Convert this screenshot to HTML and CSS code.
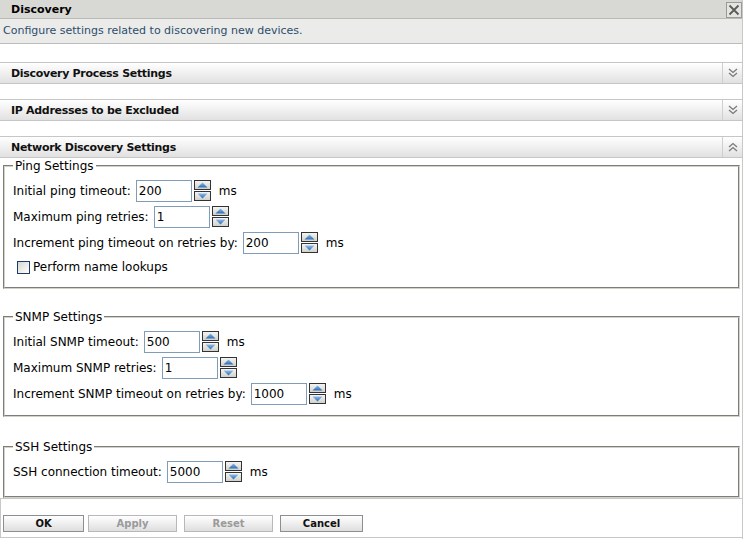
FILE: index.html
```html
<!DOCTYPE html>
<html>
<head>
<meta charset="utf-8">
<link rel="stylesheet" href="styles.css">
</head>
<body>
<div class="page">
  <div class="titlebar">
    <span class="title">Discovery</span>
    <span class="close"><svg width="16" height="16" viewBox="0 0 16 16"><rect x="0.5" y="0.5" width="15" height="15" fill="#e4e4e0" stroke="#9a9a96"/><path d="M3.5 3.5 L12.5 12.5 M12.5 3.5 L3.5 12.5" stroke="#5a5a5a" stroke-width="1.8"/></svg></span>
  </div>
  <div class="desc">Configure settings related to discovering new devices.</div>
  <div class="spacer"></div>
  <div class="sechead">
    <span class="sectitle">Discovery Process Settings</span>
    <span class="chev"><svg width="10" height="10" viewBox="0 0 10 10"><path d="M1 1 L5 4.5 L9 1 M1 5 L5 8.5 L9 5" fill="none" stroke="#7a7a7a" stroke-width="1.3"/></svg></span>
  </div>
  <div class="secgap"></div>
  <div class="sechead">
    <span class="sectitle">IP Addresses to be Excluded</span>
    <span class="chev"><svg width="10" height="10" viewBox="0 0 10 10"><path d="M1 1 L5 4.5 L9 1 M1 5 L5 8.5 L9 5" fill="none" stroke="#7a7a7a" stroke-width="1.3"/></svg></span>
  </div>
  <div class="secgap"></div>
  <div class="sechead">
    <span class="sectitle">Network Discovery Settings</span>
    <span class="chev"><svg width="10" height="10" viewBox="0 0 10 10"><path d="M1 5 L5 1.5 L9 5 M1 9 L5 5.5 L9 9" fill="none" stroke="#7a7a7a" stroke-width="1.3"/></svg></span>
  </div>
  <div class="content">
    <fieldset class="group ping">
      <legend>Ping Settings</legend>
      <div class="row">
        <span class="label">Initial ping timeout:</span>
        <input class="num" type="text" value="200">
        <span class="spin"><svg width="17" height="21" viewBox="0 0 17 21"><defs><linearGradient id="bg1" x1="0" y1="0" x2="0" y2="1"><stop offset="0" stop-color="#f6f6f4"/><stop offset="1" stop-color="#cfcfca"/></linearGradient><linearGradient id="bl1" x1="0" y1="0" x2="0" y2="1"><stop offset="0" stop-color="#8cbcec"/><stop offset="1" stop-color="#2c6ab4"/></linearGradient></defs><rect x="0.5" y="0.5" width="16" height="9" fill="url(#bg1)" stroke="#333"/><rect x="0.5" y="11.5" width="16" height="9" fill="url(#bg1)" stroke="#333"/><path d="M3.5 7.5 L8.5 2.5 L13.5 7.5 Z" fill="url(#bl1)"/><path d="M3.5 13.5 L13.5 13.5 L8.5 18.5 Z" fill="url(#bl1)"/></svg></span>
        <span class="unit">ms</span>
      </div>
      <div class="row">
        <span class="label">Maximum ping retries:</span>
        <input class="num" type="text" value="1">
        <span class="spin"><svg width="17" height="21" viewBox="0 0 17 21"><rect x="0.5" y="0.5" width="16" height="9" fill="url(#bg1)" stroke="#333"/><rect x="0.5" y="11.5" width="16" height="9" fill="url(#bg1)" stroke="#333"/><path d="M3.5 7.5 L8.5 2.5 L13.5 7.5 Z" fill="url(#bl1)"/><path d="M3.5 13.5 L13.5 13.5 L8.5 18.5 Z" fill="url(#bl1)"/></svg></span>
      </div>
      <div class="row">
        <span class="label">Increment ping timeout on retries by:</span>
        <input class="num" type="text" value="200">
        <span class="spin"><svg width="17" height="21" viewBox="0 0 17 21"><rect x="0.5" y="0.5" width="16" height="9" fill="url(#bg1)" stroke="#333"/><rect x="0.5" y="11.5" width="16" height="9" fill="url(#bg1)" stroke="#333"/><path d="M3.5 7.5 L8.5 2.5 L13.5 7.5 Z" fill="url(#bl1)"/><path d="M3.5 13.5 L13.5 13.5 L8.5 18.5 Z" fill="url(#bl1)"/></svg></span>
        <span class="unit">ms</span>
      </div>
      <div class="checkrow">
        <span class="check"></span>
        <span class="checklabel">Perform name lookups</span>
      </div>
    </fieldset>
    <fieldset class="group snmp">
      <legend>SNMP Settings</legend>
      <div class="row">
        <span class="label">Initial SNMP timeout:</span>
        <input class="num" type="text" value="500">
        <span class="spin"><svg width="17" height="21" viewBox="0 0 17 21"><rect x="0.5" y="0.5" width="16" height="9" fill="url(#bg1)" stroke="#333"/><rect x="0.5" y="11.5" width="16" height="9" fill="url(#bg1)" stroke="#333"/><path d="M3.5 7.5 L8.5 2.5 L13.5 7.5 Z" fill="url(#bl1)"/><path d="M3.5 13.5 L13.5 13.5 L8.5 18.5 Z" fill="url(#bl1)"/></svg></span>
        <span class="unit">ms</span>
      </div>
      <div class="row">
        <span class="label">Maximum SNMP retries:</span>
        <input class="num" type="text" value="1">
        <span class="spin"><svg width="17" height="21" viewBox="0 0 17 21"><rect x="0.5" y="0.5" width="16" height="9" fill="url(#bg1)" stroke="#333"/><rect x="0.5" y="11.5" width="16" height="9" fill="url(#bg1)" stroke="#333"/><path d="M3.5 7.5 L8.5 2.5 L13.5 7.5 Z" fill="url(#bl1)"/><path d="M3.5 13.5 L13.5 13.5 L8.5 18.5 Z" fill="url(#bl1)"/></svg></span>
      </div>
      <div class="row">
        <span class="label">Increment SNMP timeout on retries by:</span>
        <input class="num" type="text" value="1000">
        <span class="spin"><svg width="17" height="21" viewBox="0 0 17 21"><rect x="0.5" y="0.5" width="16" height="9" fill="url(#bg1)" stroke="#333"/><rect x="0.5" y="11.5" width="16" height="9" fill="url(#bg1)" stroke="#333"/><path d="M3.5 7.5 L8.5 2.5 L13.5 7.5 Z" fill="url(#bl1)"/><path d="M3.5 13.5 L13.5 13.5 L8.5 18.5 Z" fill="url(#bl1)"/></svg></span>
        <span class="unit">ms</span>
      </div>
    </fieldset>
    <fieldset class="group ssh">
      <legend>SSH Settings</legend>
      <div class="row">
        <span class="label">SSH connection timeout:</span>
        <input class="num" type="text" value="5000">
        <span class="spin"><svg width="17" height="21" viewBox="0 0 17 21"><rect x="0.5" y="0.5" width="16" height="9" fill="url(#bg1)" stroke="#333"/><rect x="0.5" y="11.5" width="16" height="9" fill="url(#bg1)" stroke="#333"/><path d="M3.5 7.5 L8.5 2.5 L13.5 7.5 Z" fill="url(#bl1)"/><path d="M3.5 13.5 L13.5 13.5 L8.5 18.5 Z" fill="url(#bl1)"/></svg></span>
        <span class="unit">ms</span>
      </div>
    </fieldset>
  </div>
  <div class="buttons">
    <button class="btn ok">OK</button>
    <button class="btn apply disabled">Apply</button>
    <button class="btn reset disabled">Reset</button>
    <button class="btn cancel">Cancel</button>
  </div>
</div>
</body>
</html>
```

FILE: styles.css
```css
html, body {
  margin: 0;
  padding: 0;
  background: #ffffff;
}
body {
  font-family: "DejaVu Sans", sans-serif;
  font-size: 12px;
  color: #000;
}
.page {
  width: 743px;
  height: 539px;
  box-sizing: border-box;
  border-right: 1px solid #c8c8c8;
  display: flex;
  flex-direction: column;
  overflow: hidden;
}
.titlebar {
  height: 18px;
  border-bottom: 1px solid #b9bab5;
  background: #d8d9d4;
  display: flex;
  align-items: center;
  justify-content: space-between;
  padding-left: 11px;
  padding-right: 0;
  flex: none;
}
.title {
  font-weight: bold;
  font-size: 11px;
}
.close {
  display: flex;
  width: 16px;
  height: 16px;
  margin-top: 1px;
}
.desc {
  height: 24px;
  line-height: 24px;
  background: #ebebe9;
  border-bottom: 1px solid #bcbcbc;
  padding-left: 3px;
  font-size: 11px;
  color: #2d4d6c;
  flex: none;
}
.spacer {
  height: 18px;
  flex: none;
}
.sechead {
  height: 20px;
  border-top: 1px solid #c6c6c6;
  border-bottom: 1px solid #c6c6c6;
  background: linear-gradient(#ffffff, #e1e1e1);
  display: flex;
  align-items: stretch;
  flex: none;
}
.sectitle {
  flex: 1;
  font-weight: bold;
  font-size: 11px;
  letter-spacing: -0.3px;
  line-height: 21px;
  padding-left: 11px;
  color: #111;
}
.chev {
  width: 19px;
  border-left: 1px solid #cfcfcf;
  display: flex;
  align-items: center;
  justify-content: center;
}
.secgap {
  height: 15px;
  flex: none;
}
.content {
  flex: none;
  padding: 0 2px 0 3px;
  display: flex;
  flex-direction: column;
}
.group {
  margin: 0;
  padding: 6px 8px 12px 8px;
  border: 2px groove #d2d2ca;
  display: flex;
  flex-direction: column;
  gap: 4px;
  min-width: 0;
}
.group legend {
  margin-left: 0;
  padding: 0 2px;
  line-height: 16px;
  font-size: 12px;
}
.snmp {
  margin-top: 20px;
  padding-bottom: 10px;
}
.ssh {
  margin-top: 22px;
  padding-bottom: 13px;
}
.row {
  display: flex;
  align-items: flex-start;
  height: 22px;
}
.label {
  line-height: 22px;
  margin-right: 5px;
}
.num {
  width: 56px;
  height: 22px;
  box-sizing: border-box;
  border: 1px solid #7f9db9;
  padding: 0 2px;
  margin: 0;
  font-family: "DejaVu Sans", sans-serif;
  font-size: 12px;
  color: #000;
  outline: none;
}
.spin {
  display: flex;
  margin-left: 2px;
  margin-top: 0;
}
.unit {
  margin-left: 8px;
  line-height: 22px;
}
.checkrow {
  display: flex;
  align-items: center;
  height: 16px;
  padding-left: 4px;
  margin-top: 1px;
}
.check {
  width: 13px;
  height: 13px;
  box-sizing: border-box;
  border: 1px solid #1c3d6a;
  background: linear-gradient(135deg, #d6d6d0, #ffffff);
  margin-right: 3px;
}
.checklabel {
  line-height: 16px;
}
.buttons {
  flex: none;
  margin-top: 0;
  border-top: 1px solid #c8c8c8;
  border-left: 1px solid #c8c8c8;
  border-bottom: 1px solid #c8c8c8;
  display: flex;
  align-items: flex-start;
  padding-top: 16px;
  box-sizing: border-box;
  height: 40px;
  padding-left: 2px;
}
.btn {
  height: 17px;
  margin: 0;
  padding: 0;
  box-sizing: border-box;
  border: 1px solid #8e8e8e;
  background: linear-gradient(#ffffff, #dedede);
  font-family: "DejaVu Sans", sans-serif;
  font-weight: bold;
  font-size: 10px;
  color: #111;
  line-height: 15px;
}
.btn.disabled {
  border-color: #b8b8b8;
  color: #9a9a9a;
}
.ok { width: 81px; }
.apply { width: 89px; margin-left: 4px; }
.reset { width: 89px; margin-left: 7px; }
.cancel { width: 83px; margin-left: 7px; }
```
